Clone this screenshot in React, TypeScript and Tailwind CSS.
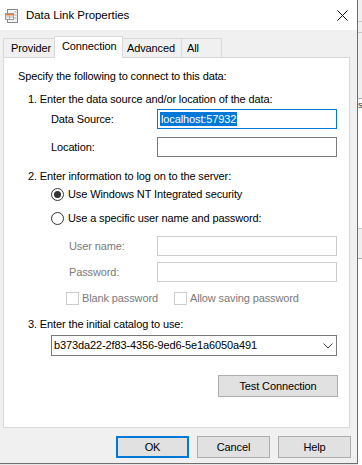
import React from "react";

function TitleIcon() {
  return (
    <svg width="14" height="14" viewBox="0 0 14 14">
      <rect x="2.5" y="0.5" width="10" height="13" fill="#f4f4f4" stroke="#8a8a8a" />
      <rect x="0.5" y="4.5" width="8" height="6" fill="#ffffff" stroke="#9a9a9a" />
      <rect x="1" y="5" width="7" height="1.5" fill="#e07b39" />
      <line x1="1" y1="8" x2="8" y2="8" stroke="#b0b0b0" />
      <line x1="4.5" y1="6.5" x2="4.5" y2="10" stroke="#b0b0b0" />
      <line x1="9.5" y1="3" x2="11.5" y2="3" stroke="#a0a0a0" />
      <line x1="9.5" y1="6" x2="11.5" y2="6" stroke="#a0a0a0" />
      <line x1="9.5" y1="9" x2="11.5" y2="9" stroke="#a0a0a0" />
    </svg>
  );
}

function Radio({ checked }: { checked: boolean }) {
  return (
    <div className="w-[13px] h-[13px] rounded-full border border-[#333333] bg-white flex items-center justify-center shrink-0">
      {checked && <div className="w-[7px] h-[7px] rounded-full bg-[#333333]" />}
    </div>
  );
}

function Checkbox() {
  return <div className="w-[13px] h-[13px] border border-[#cccccc] bg-white shrink-0" />;
}

export default function App() {
  return (
    <div className="w-[362px] h-[465px] flex bg-[#e6e6e6] overflow-hidden font-['Liberation_Sans',Arial,sans-serif] text-[11px] tracking-[-0.12px] text-black">
      <div className="w-[358px] h-[464px] shrink-0 flex flex-col bg-[#f0f0f0] border-r border-b border-[#6f6f6f]">
        {/* Title bar */}
        <div className="h-[30px] bg-white flex items-center shrink-0">
          <div className="ml-[5px] mt-[1px]">
            <TitleIcon />
          </div>
          <div className="ml-[7px] text-[11.5px] tracking-[-0.05px] leading-[14px]">Data Link Properties</div>
          <div className="ml-auto mr-[9px]">
            <svg width="11" height="11" viewBox="0 0 11 11">
              <line x1="0.5" y1="0.5" x2="10.5" y2="10.5" stroke="#111" strokeWidth="1" />
              <line x1="10.5" y1="0.5" x2="0.5" y2="10.5" stroke="#111" strokeWidth="1" />
            </svg>
          </div>
        </div>

        {/* Tabs */}
        <div className="mt-[5px] h-[22px] flex items-end pl-[3px] shrink-0">
          <div className="h-[19px] w-[52px] border border-b-0 border-[#d9d9d9] bg-[#f0f0f0] flex items-center pl-[7px] leading-[13px]">
            Provider
          </div>
          <div className="relative z-10 h-[22px] w-[69px] -mb-px -ml-px border border-b-0 border-[#d9d9d9] bg-white flex items-start pt-[3px] pl-[7px] leading-[13px]">
            Connection
          </div>
          <div className="h-[19px] w-[60px] -ml-px border border-b-0 border-[#d9d9d9] bg-[#f0f0f0] flex items-center pl-[4px] leading-[13px]">
            Advanced
          </div>
          <div className="h-[19px] w-[41px] -ml-px border border-b-0 border-[#d9d9d9] bg-[#f0f0f0] flex items-center pl-[5px] leading-[13px]">
            All
          </div>
        </div>

        {/* Panel */}
        <div className="ml-[3px] w-[347px] h-[371px] border border-[#d9d9d9] bg-white flex flex-col leading-[13px] shrink-0">
          <div className="mt-[12px] ml-[14px] h-[13px]">Specify the following to connect to this data:</div>
          <div className="mt-[10px] ml-[24px] h-[13px]">1. Enter the data source and/or location of the data:</div>

          <div className="mt-[3px] ml-[47px] h-[20px] flex items-center">
            <div className="w-[106px]">Data Source:</div>
            <div className="w-[180px] h-[20px] border border-[#0078d7] bg-white flex items-center pl-[2px]">
              <span className="bg-[#0078d7] text-white h-[14px] leading-[14px] px-px">localhost:57932</span>
            </div>
          </div>

          <div className="mt-[8px] ml-[47px] h-[20px] flex items-center">
            <div className="w-[106px]">Location:</div>
            <div className="w-[180px] h-[20px] border border-[#7a7a7a] bg-white" />
          </div>

          <div className="mt-[13px] ml-[24px] h-[13px]">2. Enter information to log on to the server:</div>

          <div className="mt-[5px] ml-[47px] h-[13px] flex items-center">
            <Radio checked />
            <div className="ml-[4px]">Use Windows NT Integrated security</div>
          </div>

          <div className="mt-[11px] ml-[47px] h-[13px] flex items-center">
            <Radio checked={false} />
            <div className="ml-[4px]">Use a specific user name and password:</div>
          </div>

          <div className="mt-[11px] ml-[65px] h-[20px] flex items-center text-[#7a7a7a]">
            <div className="w-[88px]">User name:</div>
            <div className="w-[180px] h-[20px] border border-[#cccccc] bg-white" />
          </div>

          <div className="mt-[6px] ml-[65px] h-[20px] flex items-center text-[#7a7a7a]">
            <div className="w-[88px]">Password:</div>
            <div className="w-[180px] h-[20px] border border-[#cccccc] bg-white" />
          </div>

          <div className="mt-[10px] ml-[62px] h-[13px] flex items-center text-[#7a7a7a]">
            <Checkbox />
            <div className="ml-[3px] w-[92px]">Blank password</div>
            <Checkbox />
            <div className="ml-[3px]">Allow saving password</div>
          </div>

          <div className="mt-[13px] ml-[24px] h-[13px]">3. Enter the initial catalog to use:</div>

          <div className="mt-[4px] ml-[47px] w-[286px] h-[21px] border border-[#7a7a7a] bg-white flex items-center pl-[2px] pr-[3px]">
            <span>b373da22-2f83-4356-9ed6-5e1a6050a491</span>
            <svg className="ml-auto" width="10" height="6" viewBox="0 0 10 6">
              <polyline points="0.5,0.5 5,5 9.5,0.5" fill="none" stroke="#444" strokeWidth="1" />
            </svg>
          </div>

          <div className="mt-[19px] ml-[214px] w-[120px] h-[22px] border border-[#adadad] bg-[#e1e1e1] flex items-center justify-center">
            Test Connection
          </div>
        </div>

        {/* Bottom buttons */}
        <div className="mt-[8px] ml-[116px] flex gap-[8px] shrink-0">
          <div className="w-[73px] h-[22px] border-2 border-[#0078d7] bg-[#e1e1e1] flex items-center justify-center leading-[13px]">
            OK
          </div>
          <div className="w-[73px] h-[22px] border border-[#adadad] bg-[#e1e1e1] flex items-center justify-center leading-[13px]">
            Cancel
          </div>
          <div className="w-[73px] h-[22px] border border-[#adadad] bg-[#e1e1e1] flex items-center justify-center leading-[13px]">
            Help
          </div>
        </div>
      </div>

      {/* Background window strip */}
      <div className="flex-1 flex flex-col bg-[#f3f3f3]">
        <div className="h-[22px] bg-[#f0f0f0] border-b border-[#c8c8c8]" />
        <div className="h-[11px] bg-[#f0f0f0] border-b border-[#c8c8c8]" />
        <div className="h-[66px] bg-[#f0f0f0] border-b border-[#b0b0b0]" />
        <div className="h-[50px] bg-white text-[9px] leading-[12px] text-[#333] overflow-hidden">s</div>
        <div className="h-[80px] bg-white border-b border-[#c8c8c8]" />
        <div className="h-[30px] bg-[#f0f0f0] border-b border-[#b0b0b0]" />
        <div className="flex-1 bg-white" />
      </div>
    </div>
  );
}
